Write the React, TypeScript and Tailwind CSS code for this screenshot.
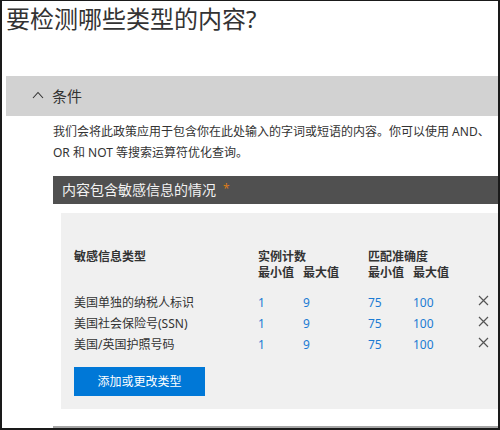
import React from "react";

const rows = [
  { name: "美国单独的纳税人标识", a: "1", b: "9", c: "75", d: "100" },
  { name: "美国社会保险号(SSN)", a: "1", b: "9", c: "75", d: "100" },
  { name: "美国/英国护照号码", a: "1", b: "9", c: "75", d: "100" },
];

function XIcon() {
  return (
    <svg width="11" height="11" viewBox="0 0 11 11" className="block">
      <path d="M1 1 L10 10 M10 1 L1 10" stroke="#555" strokeWidth="1.2" fill="none" />
    </svg>
  );
}

export default function App() {
  const font = { fontFamily: '"Noto Sans", "Noto Sans CJK SC", sans-serif' };
  return (
    <div
      style={font}
      className="w-[500px] h-[430px] bg-white border-t border-l-2 border-r-2 border-b-2 border-[#1a1a1a] overflow-hidden flex flex-col text-[#333]"
    >
      <div className="ml-[4px] mt-[2px] text-[24px] leading-[32px] whitespace-nowrap text-[#333]">
        要检测哪些类型的内容?
      </div>

      <div className="ml-[4px] mt-[41px] h-[40px] bg-[#d2d2d2] flex items-center shrink-0">
        <svg width="12" height="8" viewBox="0 0 12 8" className="ml-[26px] mt-[-2px]">
          <polyline points="1,7 6,1.5 11,7" stroke="#333" strokeWidth="1.1" fill="none" />
        </svg>
        <span className="ml-[8px] text-[15px] leading-[20px] text-[#333]">条件</span>
      </div>

      <div className="ml-[51px] mt-[5px] text-[12px] leading-[21px] text-[#333] whitespace-nowrap">
        <div>我们会将此政策应用于包含你在此处输入的字词或短语的内容。你可以使用 AND、</div>
        <div>OR 和 NOT 等搜索运算符优化查询。</div>
      </div>

      <div className="ml-[51px] mt-[13px] h-[28px] bg-[#505050] flex items-center shrink-0 w-[460px]">
        <span className="ml-[9px] text-[14px] leading-[20px] text-[#f2f2f2]">内容包含敏感信息的情况</span>
        <span className="ml-[7px] text-[12px] text-[#d97a1a] mt-[-2px]">*</span>
      </div>

      <div className="ml-[59px] mt-[9px] h-[196px] bg-[#f0f0f0] pl-[13px] pt-[36px] shrink-0 w-[450px]">
        <div className="grid grid-cols-[184px_45px_65px_45px_66px_20px] text-[12px]">
          <div className="font-bold leading-[16px] text-[#333]">敏感信息类型</div>
          <div className="col-span-2 font-bold leading-[16px] text-[#333]">实例计数</div>
          <div className="col-span-2 font-bold leading-[16px] text-[#333]">匹配准确度</div>
          <div />
          <div />
          <div className="font-bold leading-[16px] text-[#333]">最小值</div>
          <div className="font-bold leading-[16px] text-[#333]">最大值</div>
          <div className="font-bold leading-[16px] text-[#333]">最小值</div>
          <div className="font-bold leading-[16px] text-[#333]">最大值</div>
          <div />
        </div>
        <div className="mt-[11px] flex flex-col">
          {rows.map((r) => (
            <div
              key={r.name}
              className="grid grid-cols-[184px_45px_65px_45px_66px_20px] text-[12px] leading-[21px] items-center"
            >
              <div className="text-[#333]">{r.name}</div>
              <div className="text-[#1b7bd3]">{r.a}</div>
              <div className="text-[#1b7bd3]">{r.b}</div>
              <div className="text-[#1b7bd3]">{r.c}</div>
              <div className="text-[#1b7bd3]">{r.d}</div>
              <div className="mt-[-4px] ml-[-1px]">
                <XIcon />
              </div>
            </div>
          ))}
        </div>
        <button className="mt-[12px] w-[131px] h-[29px] bg-[#0078d7] text-white text-[12px] leading-[16px] flex items-center justify-center">
          添加或更改类型
        </button>
      </div>

      <div className="ml-[51px] mt-[17px] h-[2px] bg-[#a6a6a6] w-[460px] shrink-0" />
    </div>
  );
}
